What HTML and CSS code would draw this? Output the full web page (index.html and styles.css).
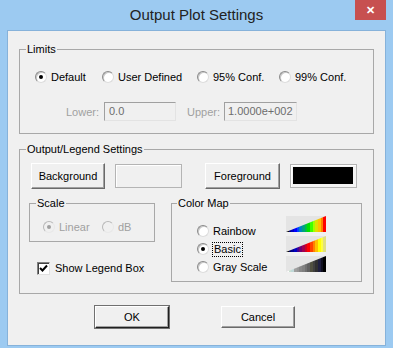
FILE: index.html
```html
<!DOCTYPE html>
<html lang="en">

<head>
    <meta charset="UTF-8">
    <title>Output Plot Settings</title>
    <link rel="stylesheet" href="styles.css">
</head>

<body>
    <div class="window">
        <div class="titlebar">
            <span class="title">Output Plot Settings</span>
            <div class="close">&#x2715;</div>
        </div>

        <div class="client">
            <!-- Limits -->
            <fieldset class="group limits">
                <legend>Limits</legend>
                <div class="limits_in">
                    <div class="row">
                        <label class="opt w_default"><span class="radio on"></span>Default</label>
                        <label class="opt w_user"><span class="radio"></span>User Defined</label>
                        <label class="opt w_95"><span class="radio"></span>95% Conf.</label>
                        <label class="opt"><span class="radio"></span>99% Conf.</label>
                    </div>
                    <div class="row range">
                        <span class="dim lbl_lower">Lower:</span>
                        <div class="field lower">0.0</div>
                        <span class="dim lbl_upper">Upper:</span>
                        <div class="field upper">1.0000e+002</div>
                    </div>
                </div>
            </fieldset>

            <!-- Output/Legend -->
            <fieldset class="group output">
                <legend>Output/Legend Settings</legend>
                <div class="output_in">
                    <div class="colors">
                        <div class="btn bg_btn">Background</div>
                        <div class="swatch"></div>
                        <div class="btn fg_btn">Foreground</div>
                        <div class="swatch dark"><div class="fill"></div></div>
                    </div>

                    <div class="lower_part">
                        <div class="left_col">
                            <fieldset class="group scale">
                                <legend>Scale</legend>
                                <div class="scale_in">
                                    <label class="opt dim w_linear"><span class="radio off on"></span>Linear</label>
                                    <label class="opt dim"><span class="radio off"></span>dB</label>
                                </div>
                            </fieldset>
                            <label class="opt check_row"><span class="check"><svg width="9" height="9" viewBox="0 0 9 9"><path d="M1 4 L3.5 6.5 L8 1.5" fill="none" stroke="#000" stroke-width="2"/></svg></span>Show Legend Box</label>
                        </div>

                        <fieldset class="group cmap">
                            <legend>Color Map</legend>
                            <div class="cmap_in">
                                <div class="cmap_opts">
                                    <label class="opt"><span class="radio"></span>Rainbow</label>
                                    <label class="opt"><span class="radio on"></span><span class="focus">Basic</span></label>
                                    <label class="opt"><span class="radio"></span>Gray Scale</label>
                                </div>
                                <div class="bars">
                                    <div class="bar"><div class="ramp rainbow"></div></div>
                                    <div class="bar"><div class="ramp basic"></div></div>
                                    <div class="bar"><div class="ramp gray"></div></div>
                                </div>
                            </div>
                        </fieldset>
                    </div>
                </div>
            </fieldset>

            <div class="actions">
                <div class="btn ok">OK</div>
                <div class="btn cancel">Cancel</div>
            </div>
        </div>
    </div>
</body>

</html>
```

FILE: styles.css
```css
* {
    margin: 0;
    padding: 0;
    box-sizing: border-box;
}

body {
    font-family: "Liberation Sans", Arial, sans-serif;
    font-size: 11px;
    color: #000;
}

.window {
    width: 393px;
    height: 348px;
    background-color: #9ccaf1;
    padding: 0 7px 2px 7px;
}

.titlebar {
    position: relative;
    height: 30px;
    line-height: 30px;
    text-align: center;
}

.title {
    font-size: 15px;
    color: #222;
}

.close {
    position: absolute;
    right: 0;
    top: 0;
    width: 31px;
    height: 20px;
    line-height: 20px;
    background-color: #c75050;
    color: #fff;
    font-size: 11px;
    font-weight: bold;
    text-align: center;
}

.client {
    height: 316px;
    background-color: #f0f0f0;
    border: 1px solid #86b2da;
    padding-left: 11px;
}

/* group boxes */
.group {
    border: 1px solid #a8a8a8;
    padding: 0;
    margin: 0;
    min-width: 0;
}

.group legend {
    line-height: 14px;
    padding: 0 1px;
    margin-left: 6px;
}

.limits {
    margin-top: 11px;
    width: 355px;
    height: 92px;
}

.limits_in {
    padding: 11px 0 0 15px;
}

.row {
    display: flex;
    align-items: center;
    height: 20px;
}

.opt {
    display: flex;
    align-items: center;
    gap: 4px;
    height: 20px;
}

.w_default {
    width: 67px;
}

.w_user {
    width: 95px;
}

.w_95 {
    width: 82px;
}

.radio {
    display: inline-flex;
    align-items: center;
    justify-content: center;
    width: 12px;
    height: 12px;
    border-radius: 50%;
    background-color: #fff;
    border: 1px solid;
    border-color: #8a8a8a #dcdcdc #dcdcdc #8a8a8a;
    box-shadow: inset 1px 1px 0 #c8c8c8;
}

.radio.on::after {
    content: "";
    width: 4px;
    height: 4px;
    border-radius: 50%;
    background-color: #000;
}

.radio.off {
    background-color: #f0f0f0;
    border-color: #b8b8b8 #e8e8e8 #e8e8e8 #b8b8b8;
    box-shadow: none;
}

.radio.off::after {
    background-color: #a0a0a0;
}

.dim {
    color: #a0a0a0;
}

.range {
    margin-top: 15px;
    height: 19px;
    padding-left: 31px;
}

.lbl_lower {
    width: 38px;
}

.lbl_upper {
    width: 37px;
    margin-left: 11px;
}

.field {
    height: 19px;
    line-height: 17px;
    padding-left: 4px;
    background-color: #f0f0f0;
    border: 1px solid;
    border-color: #a0a0a0 #e3e3e3 #e3e3e3 #a0a0a0;
    color: #6d6d6d;
}

.lower {
    width: 72px;
}

.upper {
    width: 73px;
    padding-left: 3px;
}

/* output / legend */
.output {
    margin-top: 8px;
    width: 355px;
    height: 152px;
}

.output_in {
    padding-left: 9px;
}

.colors {
    display: flex;
    align-items: center;
    margin-top: 7px;
    height: 26px;
}

.btn {
    display: flex;
    align-items: center;
    justify-content: center;
    height: 26px;
    background-color: #f0f0f0;
    border: 1px solid;
    border-color: #fff #6a6a6a #6a6a6a #fff;
    box-shadow: inset -1px -1px 0 #a0a0a0;
}

.bg_btn {
    width: 74px;
    margin-left: 2px;
}

.fg_btn {
    width: 75px;
    margin-left: 23px;
}

.swatch {
    width: 67px;
    height: 24px;
    margin-left: 10px;
    border: 1px solid #b4b4b4;
    background-color: #f0f0f0;
    box-shadow: inset 1px 1px 0 #fff;
}

.swatch.dark {
    padding: 2px 3px 3px 2px;
    background-color: #f4f4f4;
}

.swatch .fill {
    height: 100%;
    background-color: #000;
}

.lower_part {
    display: flex;
    gap: 16px;
    margin-top: 7px;
}

.left_col {
    width: 126px;
}

.scale {
    width: 126px;
    height: 46px;
}

.scale legend {
    margin-left: 6px;
}

.scale_in {
    display: flex;
    padding: 7px 0 0 13px;
}

.w_linear {
    width: 59px;
}

.check_row {
    margin: 16px 0 0 8px;
    gap: 5px;
}

.check {
    display: inline-flex;
    align-items: center;
    justify-content: center;
    width: 13px;
    height: 13px;
    background-color: #fff;
    border: 1px solid;
    border-color: #808080 #e0e0e0 #e0e0e0 #808080;
    box-shadow: inset 1px 1px 0 #404040;
}

.cmap {
    width: 191px;
    height: 86px;
}

.cmap legend {
    margin-left: 5px;
}

.cmap_in {
    display: flex;
}

.cmap_opts {
    width: 114px;
    padding: 12px 0 0 25px;
}

.cmap_opts .opt {
    height: 18px;
}

.focus {
    outline: 1px dotted #000;
    padding: 0 1px;
    line-height: 13px;
}

.bars {
    display: flex;
    flex-direction: column;
    gap: 4px;
    padding-top: 6px;
}

.bar {
    width: 40px;
    height: 16px;
    background-color: #e4e4e4;
}

.ramp {
    height: 100%;
    clip-path: polygon(0 100%, 100% 0, 100% 100%);
}

.rainbow {
    background: linear-gradient(to right,
        #000 0 6.67%, #000080 6.67% 13.33%, #0000c0 13.33% 20%, #0000ff 20% 26.67%,
        #0040ff 26.67% 33.33%, #0080c0 33.33% 40%, #00a080 40% 46.67%, #00c040 46.67% 53.33%,
        #00e000 53.33% 60%, #40ff00 60% 66.67%, #a0ff00 66.67% 73.33%, #e0e000 73.33% 80%,
        #ffc000 80% 86.67%, #ff8000 86.67% 93.33%, #ff0000 93.33% 100%);
}

.basic {
    background: linear-gradient(to right,
        #000 0 6.67%, #000060 6.67% 13.33%, #000090 13.33% 20%, #0000c0 20% 26.67%,
        #400090 26.67% 33.33%, #700070 33.33% 40%, #a00050 40% 46.67%, #d00020 46.67% 53.33%,
        #ff0000 53.33% 60%, #ff4000 60% 66.67%, #ff8000 66.67% 73.33%, #ffc000 73.33% 80%,
        #ffff00 80% 86.67%, #ffff40 86.67% 93.33%, #e0e080 93.33% 100%);
}

.gray {
    background: linear-gradient(to right,
        #fff 0 6.67%, #c8e0d0 6.67% 13.33%, #c0d8d8 13.33% 20%, #a0a0a0 20% 26.67%,
        #989898 26.67% 33.33%, #888 33.33% 40%, #808080 40% 46.67%, #707070 46.67% 53.33%,
        #606060 53.33% 60%, #505040 60% 66.67%, #404040 66.67% 73.33%, #303030 73.33% 80%,
        #202040 80% 86.67%, #101020 86.67% 93.33%, #000 93.33% 100%);
}

.actions {
    display: flex;
    margin-top: 12px;
    padding-left: 76px;
}

.actions .btn {
    width: 74px;
    height: 22px;
}

.ok {
    border-color: #fff #202020 #202020 #fff;
    outline: 1px solid #707070;
}

.cancel {
    margin-left: 52px;
}
```
